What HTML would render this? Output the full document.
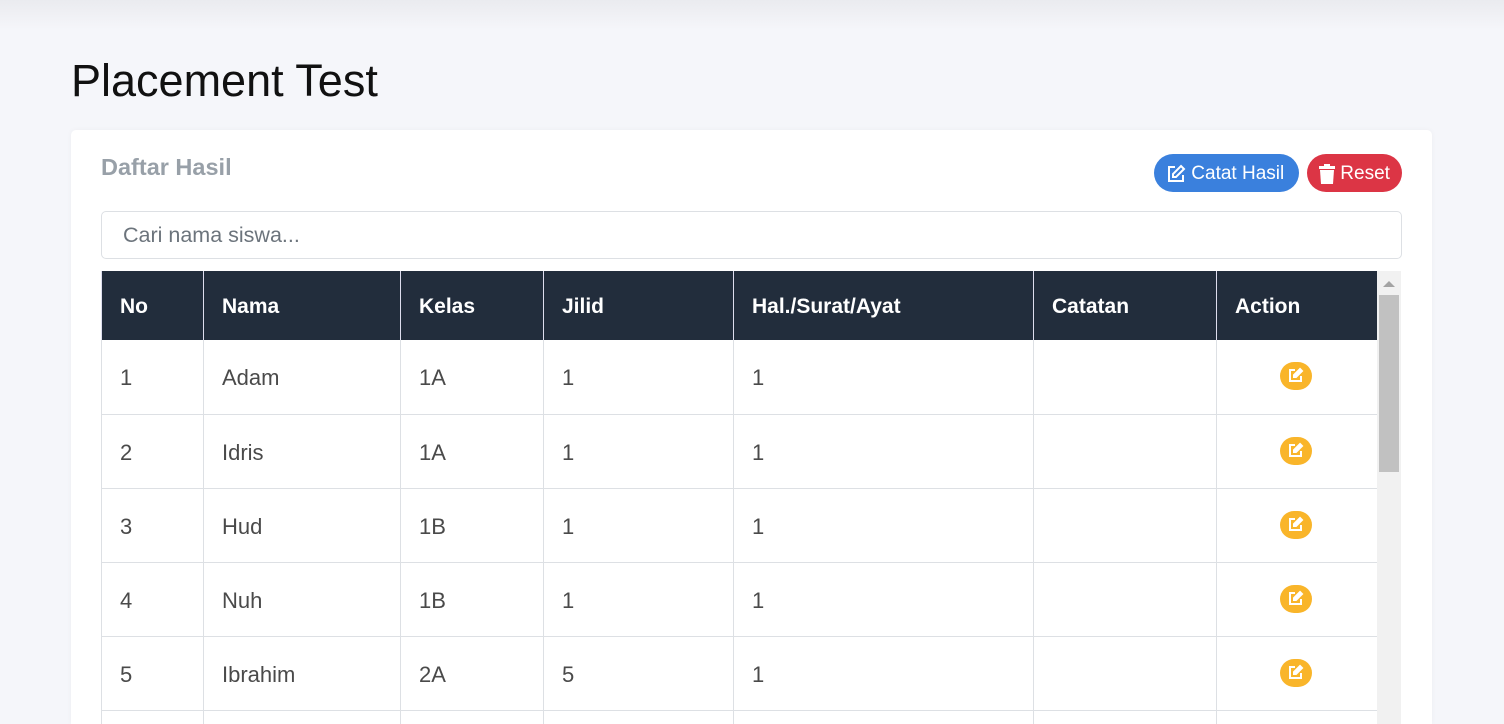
<!DOCTYPE html><html style="overflow:hidden;height:724px"><head><style>
body{margin:0;width:1504px;height:724px;overflow:hidden;background:#f5f6fa;font-family:"Liberation Sans",sans-serif;position:relative}
.topbar{position:absolute;left:0;top:0;width:1504px;height:30px;background:linear-gradient(#eaebef,#f5f6fa)}
h1{position:absolute;left:71px;top:55px;margin:0;font-size:45px;font-weight:400;color:#111}
.card{position:absolute;left:71px;top:130px;width:1361px;height:594px;overflow:hidden;background:#fff;border-radius:5px 5px 0 0;box-shadow:0 0 6px rgba(0,0,0,.04)}
.title{position:absolute;left:30px;top:24px;font-size:23.5px;font-weight:bold;color:#98a0a8}
.btn{position:absolute;top:24px;height:38px;border-radius:19px;color:#fff;font-size:19px;display:flex;align-items:center;box-sizing:border-box;padding-top:2px}
.b1{left:1083px;width:145px;background:#3a80dd;padding-left:12px}
.b2{left:1236px;width:95px;background:#dc3545;padding-left:12px}
.search{position:absolute;left:30px;top:81px;width:1301px;height:48px;border:1px solid #dde0e4;border-radius:5px;box-sizing:border-box;padding-left:21px;line-height:46px;font-size:21.5px;color:#6c747c}
table{position:absolute;left:30px;top:141px;border-collapse:collapse;font-size:22px;color:#4a4a4a;table-layout:fixed;width:1276px}
th,td{box-sizing:border-box}
th{background:#222d3c;color:#fff;text-align:left;height:69px;padding:2px 0 0 18px;border-left:1px solid #dde;font-size:21px}
td{height:74px;padding:3px 0 0 18px;border:1px solid #dde0e4;border-top:none}
.sb{position:absolute;left:1306px;top:141px;width:24px;height:460px;background:#f1f1f1}
.thumb{position:absolute;left:2px;top:24px;width:20px;height:177px;background:#c1c1c1}
.ed{display:block;margin:0 auto;width:32px;height:28px;border-radius:14px;background:#f9b52a;position:relative;left:-10px;top:-2px}
</style></head><body>
<div class="topbar"></div>
<h1>Placement Test</h1>
<div class="card">
<div class="title">Daftar Hasil</div>
<div class="btn b1"><svg width="20" height="20" viewBox="0 0 20 20" fill="none" stroke="#fff" stroke-width="2"><path d="M9 3H3v14h14v-6"/><path d="M15 2l3 3-8 8H7v-3z"/></svg>&nbsp;Catat Hasil</div>
<div class="btn b2"><svg width="16" height="20" viewBox="0 0 16 20" fill="#fff"><rect x="0" y="2" width="16" height="3"/><rect x="5" y="0" width="6" height="3"/><path d="M1 6h14l-1 14H2z"/></svg>&nbsp;Reset</div>
<div class="search">Cari nama siswa...</div>
<table>
<colgroup><col style="width:102px"><col style="width:197px"><col style="width:143px"><col style="width:190px"><col style="width:300px"><col style="width:183px"><col style="width:161px"></colgroup>
<tr><th>No</th><th>Nama</th><th>Kelas</th><th>Jilid</th><th>Hal./Surat/Ayat</th><th>Catatan</th><th>Action</th></tr>
<tr><td>1</td><td>Adam</td><td>1A</td><td>1</td><td>1</td><td></td><td><span class="ed"><svg width="32" height="28" viewBox="0 0 32 28" fill="none" stroke="#fff" stroke-width="2"><path d="M15 8h-5v11h11v-5"/><path d="M20 7l2 2-6 6h-2v-2z" fill="#fff"/></svg></span></td></tr>
<tr><td>2</td><td>Idris</td><td>1A</td><td>1</td><td>1</td><td></td><td><span class="ed"><svg width="32" height="28" viewBox="0 0 32 28" fill="none" stroke="#fff" stroke-width="2"><path d="M15 8h-5v11h11v-5"/><path d="M20 7l2 2-6 6h-2v-2z" fill="#fff"/></svg></span></td></tr>
<tr><td>3</td><td>Hud</td><td>1B</td><td>1</td><td>1</td><td></td><td><span class="ed"><svg width="32" height="28" viewBox="0 0 32 28" fill="none" stroke="#fff" stroke-width="2"><path d="M15 8h-5v11h11v-5"/><path d="M20 7l2 2-6 6h-2v-2z" fill="#fff"/></svg></span></td></tr>
<tr><td>4</td><td>Nuh</td><td>1B</td><td>1</td><td>1</td><td></td><td><span class="ed"><svg width="32" height="28" viewBox="0 0 32 28" fill="none" stroke="#fff" stroke-width="2"><path d="M15 8h-5v11h11v-5"/><path d="M20 7l2 2-6 6h-2v-2z" fill="#fff"/></svg></span></td></tr>
<tr><td>5</td><td>Ibrahim</td><td>2A</td><td>5</td><td>1</td><td></td><td><span class="ed"><svg width="32" height="28" viewBox="0 0 32 28" fill="none" stroke="#fff" stroke-width="2"><path d="M15 8h-5v11h11v-5"/><path d="M20 7l2 2-6 6h-2v-2z" fill="#fff"/></svg></span></td></tr>
<tr><td style="height:14px"></td><td></td><td></td><td></td><td></td><td></td><td></td></tr>
</table>
<div class="sb"><svg style="position:absolute;left:6px;top:9px" width="12" height="8"><path d="M0 7L6 1 12 7z" fill="#a3a3a3"/></svg><div class="thumb"></div></div>
</div>
</body></html>
